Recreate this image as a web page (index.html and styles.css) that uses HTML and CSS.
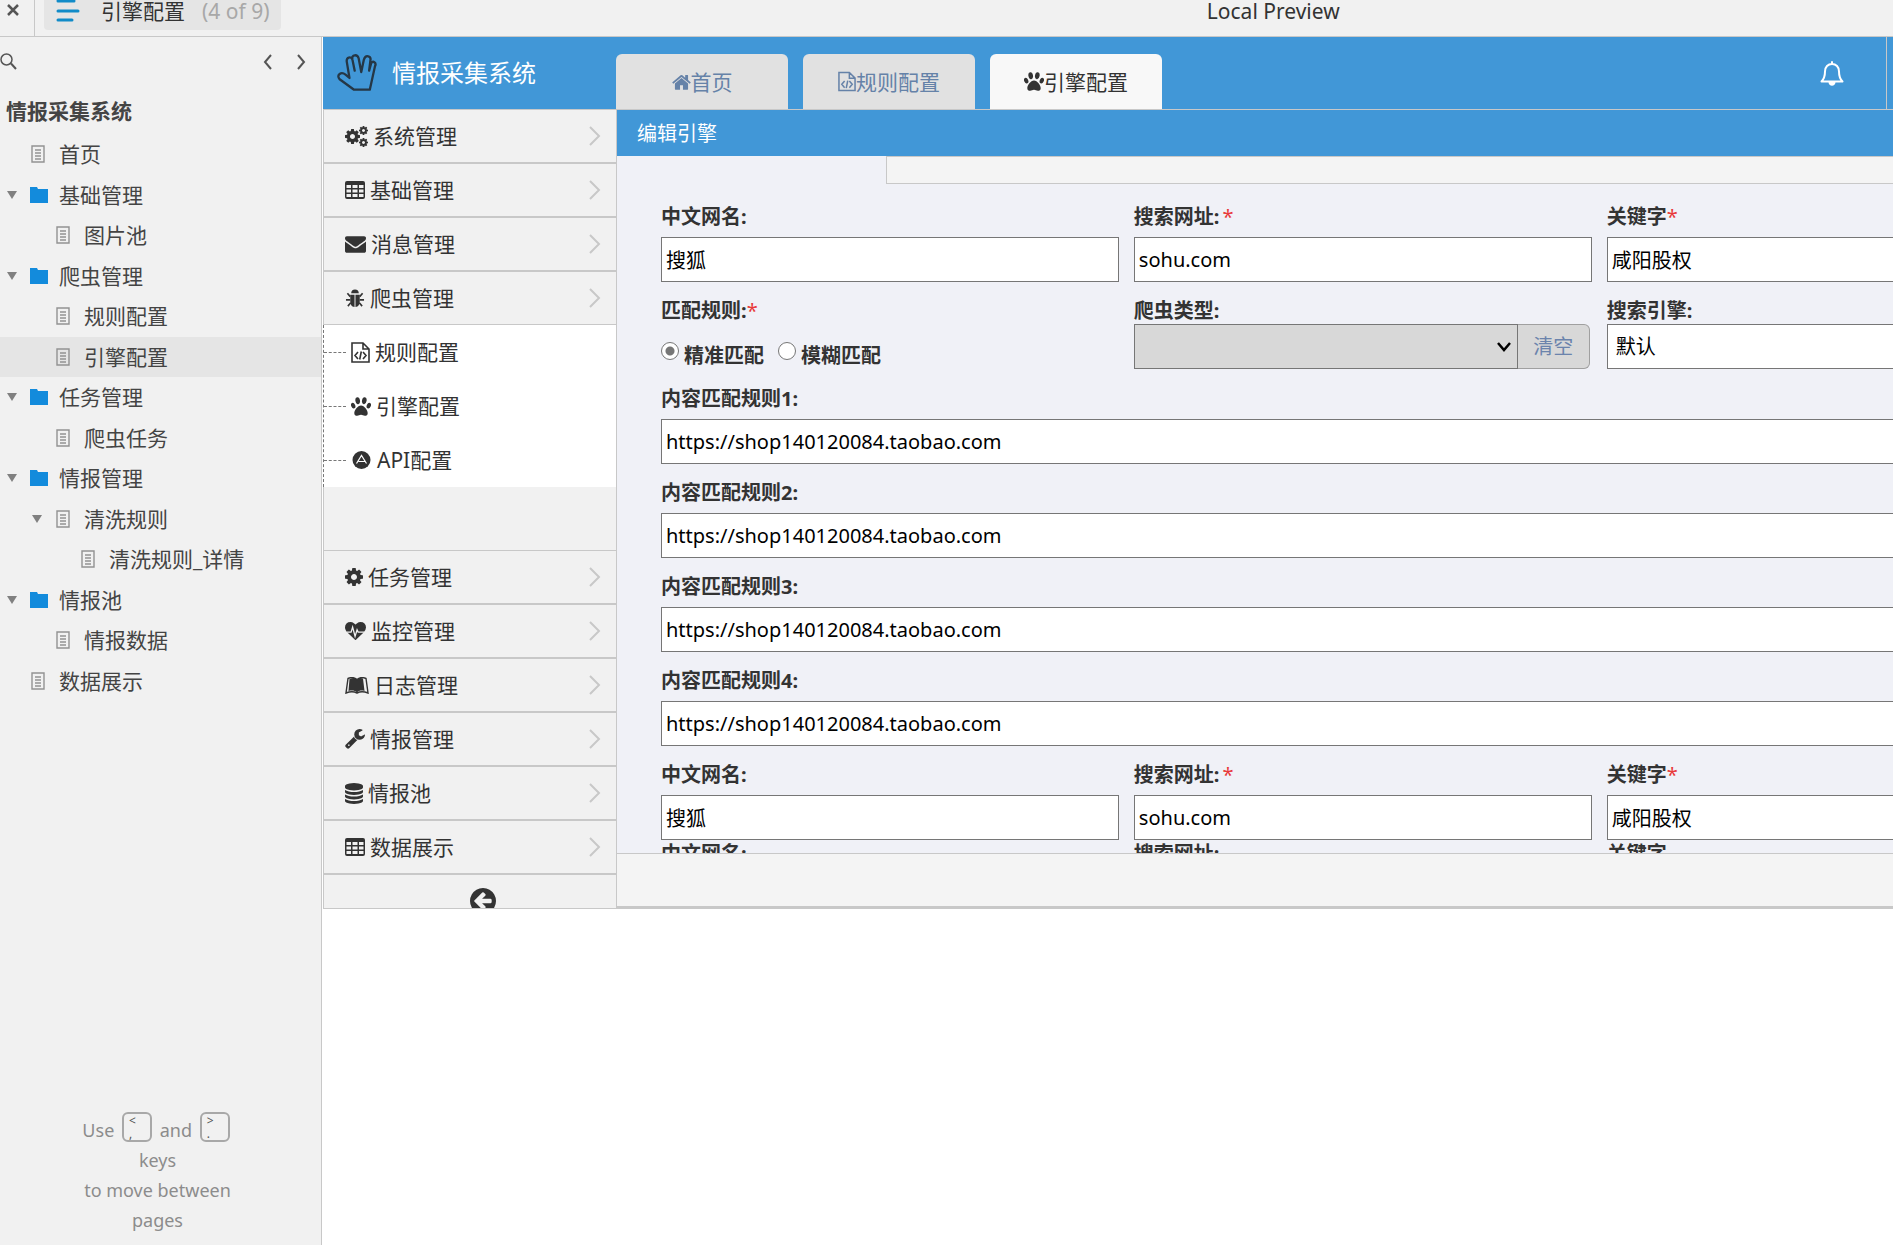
FILE: index.html
```html
<!DOCTYPE html>
<html lang="zh-CN">
<head>
<meta charset="utf-8">
<title>引擎配置</title>
<meta name="viewport" content="width=device-width, initial-scale=1">
<link rel="stylesheet" href="styles.css">
</head>
<body>
<svg class="defs" aria-hidden="true">
  <symbol id="doc" viewBox="0 0 14 18"><path d="M1 1h12v16H1zM4 5h6M4 8h6M4 11h6M4 14h6" fill="none" stroke="#929292" stroke-width="1.400"/></symbol>
  <symbol id="folder" viewBox="0 0 18 16"><path d="M0 0h7l1 2h10v14H0z" fill="#138bdc"/></symbol>
  <symbol id="cog" viewBox="128 128 1536 1536"><path d="M1152 896q0-106-75-181t-181-75-181 75-75 181 75 181 181 75 181-75 75-181zm512-109v222q0 12-8 23t-20 13l-185 28q-19 54-39 91 35 50 107 138 10 12 10 25t-9 23q-27 37-99 108t-94 71q-12 0-26-9l-138-108q-44 23-91 38-16 136-29 186-7 28-36 28h-222q-14 0-24.5-8.5t-11.5-21.5l-28-184q-49-16-90-37l-141 107q-10 9-25 9-14 0-25-11-126-114-165-168-7-10-7-23 0-12 8-23 15-21 51-66.5t54-70.5q-27-50-41-99l-183-27q-13-2-21-12.5t-8-23.5v-222q0-12 8-23t19-13l186-28q14-46 39-92-40-57-107-138-10-12-10-24 0-10 9-23 26-36 98.5-107.5t94.5-71.5q13 0 26 10l138 107q44-23 91-38 16-136 29-186 7-28 36-28h222q14 0 24.5 8.5t11.5 21.5l28 184q49 16 90 37l142-107q9-9 24-9 13 0 25 10 129 119 165 170 7 8 7 22 0 12-8 23-15 21-51 66.5t-54 70.5q26 50 41 98l183 28q13 2 21 12.5t8 23.5z"/></symbol>
  <symbol id="cogs" viewBox="0 0 23 21"><use href="#cog" x="0" y="3" width="15" height="15"/><use href="#cog" x="14" y="0" width="9" height="9"/><use href="#cog" x="14" y="12" width="9" height="9"/></symbol>
  <symbol id="table" viewBox="0 0 20 18"><path fill-rule="evenodd" d="M2 0h16a2 2 0 0 1 2 2v14a2 2 0 0 1-2 2H2a2 2 0 0 1-2-2V2a2 2 0 0 1 2-2zM1.500 4v3h4.500V4zM7.500 4v3h5V4zM14 4v3h4.500V4zM1.500 8.500v3h4.500v-3zM7.500 8.500v3h5v-3zM14 8.500v3h4.500v-3zM1.500 13v3h4.500v-3zM7.500 13v3h5v-3zM14 13v3h4.500v-3z"/></symbol>
  <symbol id="mail" viewBox="0 256 1792 1408"><path d="M1792 710v794q0 66-47 113t-113 47h-1472q-66 0-113-47t-47-113v-794q44 49 101 87 362 246 497 345 57 42 92.500 65.500t94.500 48 110 24.500h2q51 0 110-24.500t94.500-48 92.500-65.500q170-123 498-345 57-39 100-87zm0-294q0 79-49 151t-122 123q-376 261-468 325-10 7-42.500 31t-54 38.500-52 32.500-57.500 27-50 9h-2q-23 0-50-9t-57.500-27-52-32.500-54-38.500-42.500-31q-91-64-262-182.500t-205-142.500q-62-42-117-115.500t-55-136.500q0-78 41.500-130t118.500-52h1472q65 0 112.500 47t47.500 113z"/></symbol>
  <symbol id="bug" viewBox="0 0 20 20"><path d="M6 4.500a4 4 0 0 1 8 0zM5 6h4.500v13C6.500 19 5 16 5 13zM10.500 6H15v7c0 3-1.500 6-4.500 6z"/><path d="M5 8 2 4.500M15 8l3-3.500M5 11.500H.5M15 11.500h4.500M5.500 14.500 2.500 18M14.500 14.500l3 3.500" stroke="currentColor" stroke-width="1.700" fill="none"/></symbol>
  <symbol id="code" viewBox="0 0 19 21"><path d="M1 1h11l6 6v13H1zM12 1v6h6M7 10l-3 3.500L7 17M12 10l3 3.500-3 3.500M10.300 9.500l-1.600 8" fill="none" stroke="currentColor" stroke-width="1.600"/></symbol>
  <symbol id="paw" viewBox="0 0 20 19"><ellipse cx="6.700" cy="3.700" rx="2.300" ry="3.500" transform="rotate(-10 6.700 3.700)"/><ellipse cx="13.300" cy="3.700" rx="2.300" ry="3.500" transform="rotate(10 13.300 3.700)"/><ellipse cx="2.200" cy="8.700" rx="2" ry="2.900" transform="rotate(-25 2.200 8.700)"/><ellipse cx="17.800" cy="8.700" rx="2" ry="2.900" transform="rotate(25 17.800 8.700)"/><path d="M10 8.500c3.300 0 6.700 4.700 6.700 7.700 0 2-1.300 2.500-2.800 2.500S11.500 17.800 10 17.800s-2.400.9-3.900.9-2.800-.5-2.800-2.500c0-3 3.400-7.700 6.700-7.700z"/></symbol>
  <symbol id="api" viewBox="0 0 18 18"><circle cx="9" cy="9" r="9"/><path d="M4 12.500 9 4.500l5 8M6 10.500h6.500" fill="none" stroke="#fff" stroke-width="1.200"/></symbol>
  <symbol id="heart" viewBox="0 128 1792 1536"><path d="M896 1664q-26 0-44-18l-624-602q-10-8-27.500-26t-55.500-65.500-68-97.500-53.500-121-23.500-138q0-220 127-344t351-124q62 0 126.500 21.500t120 58 95.500 68.500 76 68q36-36 76-68t95.500-68.500 120-58 126.500-21.500q224 0 351 124t127 344q0 221-229 450l-623 600q-18 18-44 18z"/><path d="M150 990h370l130-420 210 780 170-560 90 200h520" fill="none" stroke="#f1f1f1" stroke-width="110"/></symbol>
  <symbol id="book" viewBox="0 0 24 17"><path d="M4.500 2C8 .5 10.500 1 12 2.500 13.500 1 16 .5 18 1.500l1.500 12.500c-3-1-5.500-.5-7.500 1.500-2-2-5-2.500-8.500-1.500z"/><path d="M12 2.500C9 0 6 .2 3 1.500L1 16c4-1.500 8-1.500 11 0 3-1.500 7-1.500 11 0L21 1.500C18 .2 15 0 12 2.500z" fill="none" stroke="currentColor" stroke-width="1.400"/></symbol>
  <symbol id="wrench" viewBox="64 128 1664 1664"><path d="M448 1472q0-26-19-45t-45-19-45 19-19 45 19 45 45 19 45-19 19-45zm644-420l-682 682q-37 37-90 37-52 0-91-37l-106-108q-38-36-38-90 0-53 38-91l681-681q39 98 114.500 173.500t173.500 114.500zm634-435q0 39-23 106-47 134-164.500 217.500t-258.500 83.500q-185 0-316.500-131.500t-131.500-316.500 131.500-316.500 316.500-131.500q58 0 121.500 16.500t107.500 46.500q16 11 16 28t-16 28l-293 169v224l193 107q5-3 79-48.500t135.500-81 70.500-35.500q15 0 23.500 10t8.500 25z"/></symbol>
  <symbol id="db" viewBox="128 0 1536 1792"><path d="M896 768q237 0 443-43t325-127v170q0 69-103 128t-280 93.500-385 34.500-385-34.500-280-93.500-103-128v-170q119 84 325 127t443 43zm0 768q237 0 443-43t325-127v170q0 69-103 128t-280 93.500-385 34.500-385-34.500-280-93.500-103-128v-170q119 84 325 127t443 43zm0-384q237 0 443-43t325-127v170q0 69-103 128t-280 93.500-385 34.500-385-34.500-280-93.500-103-128v-170q119 84 325 127t443 43zm0-1152q208 0 385 34.500t280 93.500 103 128v128q0 69-103 128t-280 93.500-385 34.500-385-34.500-280-93.500-103-128v-128q0-69 103-128t280-93.500 385-34.500z"/></symbol>
  <symbol id="home" viewBox="64 192 1664 1344"><path d="M1472 992v480q0 26-19 45t-45 19h-384v-384h-256v384h-384q-26 0-45-19t-19-45v-480q0-1 .5-3t.5-3l575-474 575 474q1 2 1 6zm223-69l-62 74q-8 9-21 11h-3q-13 0-21-7l-692-577-692 577q-12 8-24 7-13-2-21-11l-62-74q-8-10-7-23.500t11-21.500l719-599q32-26 76-26t76 26l244 204v-195q0-14 9-23t23-9h192q14 0 23 9t9 23v408l219 182q10 8 11 21.500t-7 23.500z"/></symbol>
  <symbol id="back" viewBox="128 128 1536 1536"><path d="M1408 960v-128q0-26-19-45t-45-19h-502l189-189q19-19 19-45t-19-45l-91-91q-18-18-45-18t-45 18l-362 362-91 91q-18 18-18 45t18 45l91 91 362 362q18 18 45 18t45-18l91-91q18-18 18-45t-18-45l-189-189h502q26 0 45-19t19-45zm256-64q0 209-103 385.500t-279.500 279.500-385.500 103-385.500-103-279.500-279.500-103-385.500 103-385.500 279.500-279.500 385.500-103 385.500 103 279.500 279.500 103 385.500z"/></symbol>
  <symbol id="chev" viewBox="0 0 12 20"><path d="M1 1l9 9-9 9" fill="none" stroke="#c8c8c8" stroke-width="2"/></symbol>
</svg>

<header class="topbar">
  <button class="close" type="button" aria-label="关闭"><svg width="12" height="12" viewBox="0 0 12 12"><path d="M1 1l10 10M11 1L1 11" stroke="#555" stroke-width="2.500"/></svg></button>
  <button class="crumb" type="button">
    <svg width="24" height="24" viewBox="0 0 24 24"><path d="M2 3h16M2 13h20M2 22h14" stroke="#118bc8" stroke-width="3" stroke-linecap="round"/></svg>
    <span class="crumb-name">引擎配置</span><span class="crumb-count">(4 of 9)</span>
  </button>
  <div class="topbar-title">Local Preview</div>
</header>

<div class="layout">
  <aside class="sidebar">
    <div class="side-tools">
      <button type="button" aria-label="搜索"><svg width="17" height="17" viewBox="0 0 17 17"><path d="M11 10.500l5 5.500" stroke="#555" stroke-width="2"/><circle cx="6.500" cy="6.500" r="5.500" fill="none" stroke="#555" stroke-width="1.500"/></svg></button>
      <button class="prev" type="button" aria-label="上一页"><svg width="10" height="16" viewBox="0 0 10 16"><path d="M8 1L2 8l6 7" fill="none" stroke="#555" stroke-width="2"/></svg></button>
      <button type="button" aria-label="下一页"><svg width="10" height="16" viewBox="0 0 10 16"><path d="M2 1l6 7-6 7" fill="none" stroke="#555" stroke-width="2"/></svg></button>
    </div>
    <h1 class="side-title">情报采集系统</h1>
    <nav class="tree">
      <a href="#" class="node"><svg class="doc"><use href="#doc"/></svg>首页</a>
      <a href="#" class="node open"><svg class="folder"><use href="#folder"/></svg>基础管理</a>
      <a href="#" class="node l2"><svg class="doc"><use href="#doc"/></svg>图片池</a>
      <a href="#" class="node open"><svg class="folder"><use href="#folder"/></svg>爬虫管理</a>
      <a href="#" class="node l2"><svg class="doc"><use href="#doc"/></svg>规则配置</a>
      <a href="#" class="node l2 current"><svg class="doc"><use href="#doc"/></svg>引擎配置</a>
      <a href="#" class="node open"><svg class="folder"><use href="#folder"/></svg>任务管理</a>
      <a href="#" class="node l2"><svg class="doc"><use href="#doc"/></svg>爬虫任务</a>
      <a href="#" class="node open"><svg class="folder"><use href="#folder"/></svg>情报管理</a>
      <a href="#" class="node l2 open"><svg class="doc"><use href="#doc"/></svg>清洗规则</a>
      <a href="#" class="node l3"><svg class="doc"><use href="#doc"/></svg>清洗规则_详情</a>
      <a href="#" class="node open"><svg class="folder"><use href="#folder"/></svg>情报池</a>
      <a href="#" class="node l2"><svg class="doc"><use href="#doc"/></svg>情报数据</a>
      <a href="#" class="node"><svg class="doc"><use href="#doc"/></svg>数据展示</a>
    </nav>
    <p class="hint">Use <kbd><span>&lt;</span><span>,</span></kbd> and <kbd><span>&gt;</span><span>.</span></kbd><br>keys<br>to move between<br>pages</p>
  </aside>

  <div class="app">
    <div class="app-head">
      <div class="brand">
        <svg width="40" height="38" viewBox="52 72 122 114"><path d="M104 180 60 148Q52 138 60 132T78 134L90 144 82 96Q80 84 88 82T99 88L106 122 99 88Q97 76 106 75T118 84L126 126 134 88Q138 76 147 78T154 90L150 122 156 100Q160 92 166 96T168 108L152 180Z" fill="none" stroke="#253746" stroke-width="7" stroke-linejoin="round"/></svg>
        <span>情报采集系统</span>
      </div>
      <nav class="tabs">
        <a href="#" class="tab"><svg width="19" height="18"><use href="#home"/></svg>首页</a>
        <a href="#" class="tab"><svg width="18" height="21"><use href="#code"/></svg>规则配置</a>
        <a href="#" class="tab active"><svg width="20" height="19"><use href="#paw"/></svg>引擎配置</a>
      </nav>
      <button class="bell" type="button" aria-label="通知"><svg width="24" height="25" viewBox="0 0 24 25"><path d="M1.500 20.500c3-3 3.500-5 3.500-10C5 6 8 3 12 3s7 3 7 7.500c0 5 .5 7 3.500 10zM12 3V1" fill="none" stroke="#fff" stroke-width="2" stroke-linejoin="round" stroke-linecap="round"/><path d="M8.500 21h7c0 5-7 5-7 0z" fill="#fff"/></svg></button>
    </div>

    <div class="app-body">
      <nav class="menu">
        <a href="#" class="item"><svg width="23" height="21"><use href="#cogs"/></svg>系统管理<svg class="chev"><use href="#chev"/></svg></a>
        <a href="#" class="item"><svg width="20" height="18"><use href="#table"/></svg>基础管理<svg class="chev"><use href="#chev"/></svg></a>
        <a href="#" class="item"><svg width="21" height="17"><use href="#mail"/></svg>消息管理<svg class="chev"><use href="#chev"/></svg></a>
        <a href="#" class="item expanded"><svg width="20" height="19"><use href="#bug"/></svg>爬虫管理<svg class="chev"><use href="#chev"/></svg></a>
        <div class="submenu">
          <a href="#" class="sub"><svg width="19" height="21"><use href="#code"/></svg>规则配置</a>
          <a href="#" class="sub"><svg width="20" height="19"><use href="#paw"/></svg>引擎配置</a>
          <a href="#" class="sub"><svg width="21" height="18"><use href="#api"/></svg>API配置</a>
        </div>
        <div class="menu-gap"></div>
        <a href="#" class="item"><svg width="18" height="18"><use href="#cog"/></svg>任务管理<svg class="chev"><use href="#chev"/></svg></a>
        <a href="#" class="item"><svg width="21" height="18"><use href="#heart"/></svg>监控管理<svg class="chev"><use href="#chev"/></svg></a>
        <a href="#" class="item"><svg width="24" height="17"><use href="#book"/></svg>日志管理<svg class="chev"><use href="#chev"/></svg></a>
        <a href="#" class="item"><svg width="20" height="20"><use href="#wrench"/></svg>情报管理<svg class="chev"><use href="#chev"/></svg></a>
        <a href="#" class="item"><svg width="18" height="21"><use href="#db"/></svg>情报池<svg class="chev"><use href="#chev"/></svg></a>
        <a href="#" class="item"><svg width="20" height="18"><use href="#table"/></svg>数据展示<svg class="chev"><use href="#chev"/></svg></a>
        <button class="collapse" type="button" aria-label="收起"><svg width="26" height="26"><use href="#back"/></svg></button>
      </nav>

      <main class="main">
        <h2 class="panel-title">编辑引擎</h2>
        <div class="strip"></div>
        <div class="scroller">
          <form class="form">
            <div class="row">
              <div class="field"><label for="n1">中文网名:</label><input id="n1" type="text" value="搜狐"></div>
              <div class="field"><label for="u1">搜索网址:<em class="spaced">*</em></label><input id="u1" type="text" value="sohu.com"></div>
              <div class="field"><label for="k1">关键字<em>*</em></label><input id="k1" type="text" value="咸阳股权"></div>
            </div>
            <div class="row tight">
              <fieldset class="field">
                <legend>匹配规则:<em>*</em></legend>
                <div class="radios">
                  <input id="r1" type="radio" name="match" checked><label for="r1">精准匹配</label>
                  <input id="r2" type="radio" name="match"><label for="r2">模糊匹配</label>
                </div>
              </fieldset>
              <div class="field"><label for="t1">爬虫类型:</label>
                <div class="combo">
                  <div class="select"><select id="t1" class="grey"><option></option></select><svg width="14" height="10" viewBox="0 0 14 10"><path d="M1 1l6 7 6-7" fill="none" stroke="#000" stroke-width="2.500"/></svg></div>
                  <button class="clear" type="button">清空</button>
                </div>
              </div>
              <div class="field"><label for="e1">搜索引擎:</label><div class="select"><select id="e1"><option>默认</option></select></div></div>
            </div>
            <div class="field"><label for="c1">内容匹配规则1:</label><input id="c1" type="text" value="https://shop140120084.taobao.com"></div>
            <div class="field"><label for="c2">内容匹配规则2:</label><input id="c2" type="text" value="https://shop140120084.taobao.com"></div>
            <div class="field"><label for="c3">内容匹配规则3:</label><input id="c3" type="text" value="https://shop140120084.taobao.com"></div>
            <div class="field"><label for="c4">内容匹配规则4:</label><input id="c4" type="text" value="https://shop140120084.taobao.com"></div>
            <div class="row">
              <div class="field"><label for="n2">中文网名:</label><input id="n2" type="text" value="搜狐"></div>
              <div class="field"><label for="u2">搜索网址:<em class="spaced">*</em></label><input id="u2" type="text" value="sohu.com"></div>
              <div class="field"><label for="k2">关键字<em>*</em></label><input id="k2" type="text" value="咸阳股权"></div>
            </div>
            <div class="row heads">
              <span>中文网名:</span>
              <span>搜索网址:</span>
              <span>关键字</span>
            </div>
          </form>
        </div>
        <div class="panel-foot"></div>
      </main>
    </div>
  </div>
</div>
</body>
</html>
```
FILE: styles.css
```css
* { box-sizing: border-box; }
body {
  margin: 0;
  min-height: 100vh;
  display: flex;
  flex-direction: column;
  overflow: hidden;
  background: #fff;
  color: #333;
  font: 21px/28px "Noto Sans", "Noto Sans CJK SC", sans-serif;
}
a { color: inherit; text-decoration: none; }
button { margin: 0; padding: 0; border: 0; background: none; color: inherit; font: inherit; }
svg { display: block; flex: none; fill: currentColor; }
.defs { position: absolute; width: 0; height: 0; }

/* top bar */
.topbar { display: flex; align-items: flex-start; height: 37px; background: #f1f1f1; border-bottom: 1px solid #c8c8c8; }
.close { width: 35px; height: 36px; padding: 4px 0 0 7px; border-right: 1px solid #c8c8c8; display: flex; }
.crumb { display: flex; align-items: flex-start; height: 30px; margin-left: 9px; padding: 0 12px; background: #e5e5e5; border-radius: 0 0 4px 4px; }
.crumb svg { margin-top: -2px; }
.crumb-name { margin-left: 21px; line-height: 22px; }
.crumb-count { margin-left: 17px; line-height: 22px; color: #a8a8a8; }
.topbar-title { flex: 1; padding-left: 372px; text-align: center; line-height: 22px; }

.layout { flex: 1; display: flex; align-items: stretch; }

/* page tree */
.sidebar { flex: none; width: 322px; display: flex; flex-direction: column; background: #f1f1f1; border-right: 1px solid #c8c8c8; color: #444; }
.side-tools { display: flex; align-items: center; height: 49px; padding-right: 15px; }
.prev { margin-left: auto; margin-right: 23px; }
.side-title { margin: 11px 0 9px; padding-left: 6px; font-size: 21px; line-height: 28px; }
.tree { display: grid; grid-auto-rows: 1fr; height: 567px; }
.node { display: flex; align-items: center; padding-left: 30px; }
.node.open::before { content: ""; margin: 0 13px 0 -23px; border: 5px solid transparent; border-top: 8px solid #808080; border-bottom: 0; }
.node .folder { width: 18px; height: 16px; margin-right: 11px; }
.node .doc { width: 16px; height: 18px; margin-right: 13px; }
.node.l2 { padding-left: 55px; }
.node.l3 { padding-left: 80px; }
.node.current { background: #e5e5e5; }
.hint { margin: auto 0 10px; padding-right: 6px; text-align: center; color: #8c8c8c; font-size: 18px; line-height: 30px; }
.hint kbd { display: inline-flex; flex-direction: column; width: 30px; height: 30px; margin: 0 3px; padding: 0 0 0 5px; border: 2px solid #a8a8a8; border-radius: 6px; text-align: left; font: 12px/13px "Noto Sans", sans-serif; color: #555; vertical-align: text-bottom; }

/* previewed application */
.app { flex: 1; min-width: 0; margin-left: 1px; align-self: flex-start; }
.app-head { display: flex; height: 73px; background: #4197d7; border-bottom: 1px solid #c8c8c8; }
.brand { flex: none; width: 293px; display: flex; align-items: center; gap: 15px; padding-left: 14px; color: #fff; font-size: 24px; }
.tabs { flex: 1; display: flex; align-items: flex-end; gap: 15px; }
.tab { width: 172px; height: 55px; display: flex; align-items: center; justify-content: center; border-radius: 6px 6px 0 0; background: #e1e1e1; color: #6582a8; }
.tab.active { background: #f8f8f8; color: #333; }
.bell { width: 67px; margin-right: 6px; border-right: 1px solid #c8c8c8; display: flex; align-items: center; }

.app-body { display: flex; align-items: stretch; }
.menu { flex: none; width: 294px; border: 1px solid #c8c8c8; border-top: 0; background: #f1f1f1; }
.item { display: flex; align-items: center; gap: 5px; height: 54px; padding: 0 15px 0 21px; border-top: 1px solid #c8c8c8; border-bottom: 1px solid #c8c8c8; }
.item:first-child { height: 53px; border-top: 0; }
.chev { width: 12px; height: 20px; margin-left: auto; }
.submenu { background: #fff; border-left: 1px dashed #777; margin-left: -1px; }
.sub { display: flex; align-items: center; gap: 5px; height: 54px; }
.sub::before { content: ""; width: 22px; border-top: 1px dashed #777; }
.menu-gap { height: 63px; }
.collapse { display: flex; justify-content: center; width: 100%; height: 34px; padding-top: 13px; padding-left: 25px; overflow: hidden; border-top: 1px solid #c8c8c8; }

/* main takes its height from the menu beside it */
.main { flex: 1; min-width: 0; contain: size; display: flex; flex-direction: column; background: #f0f1f7; }
.panel-title { flex: none; margin: 0; height: 46px; padding: 2px 0 0 20px; background: #4197d7; color: #fff; font-size: 20px; font-weight: 400; line-height: 44px; }
.strip { flex: none; height: 28px; margin-left: 269px; background: #f4f4f4; border: 1px solid #c8c8c8; border-right: 0; }
.scroller { flex: 1; min-height: 0; overflow: hidden; }
.panel-foot { flex: none; height: 56px; background: #f4f4f4; border-top: 1px solid #c8c8c8; border-bottom: 3px solid #c8c8c8; }

.form { width: 110%; margin-left: 44px; padding-top: 13px; display: flex; flex-direction: column; gap: 9px; font-size: 20px; font-weight: 700; }
.row { display: grid; grid-template-columns: repeat(3, 1fr); gap: 15px; }
.field { display: flex; flex-direction: column; min-width: 0; margin: 0; padding: 0; border: 0; }
.field > label { line-height: 40px; }
.field em { color: #e83a3a; font-style: normal; font-weight: 400; }
.field em.spaced { margin-left: 3px; }
.field input[type="text"], .select select {
  width: 100%; height: 45px; margin: 0; padding: 0 4px;
  border: 1px solid #767676; border-radius: 0; background: #fff; color: #000;
  font: 20px/28px "Noto Sans", "Noto Sans CJK SC", sans-serif;
}
.tight { padding: 7px 0 1px; }
.tight .field > label, .tight legend { padding: 0; line-height: 26px; }
.radios { display: flex; align-items: center; height: 45px; padding-top: 18px; }
.radios input { appearance: none; width: 18px; height: 18px; margin: 0 5px 10px 0; border: 1px solid #767676; border-radius: 50%; background: #fff; }
.radios input:checked { background: radial-gradient(circle, #767676 4px, #fff 5px); }
.radios label { margin-right: 14px; }
.combo { display: flex; padding-right: 2px; }
.select { flex: 1; display: grid; align-items: center; }
.select > * { grid-area: 1 / 1; }
.select svg { justify-self: end; margin-right: 7px; pointer-events: none; }
.select select { appearance: none; padding-left: 8px; }
.select select.grey { background: #d8d8d8; }
.clear { width: 72px; height: 45px; border: 1px solid #a0a0a0; border-left: 0; border-radius: 0 6px 6px 0; background: #d8d8d8; color: #6b83ac; font-size: 20px; font-weight: 400; }
.heads { margin-top: -9px; line-height: 28px; }
```
